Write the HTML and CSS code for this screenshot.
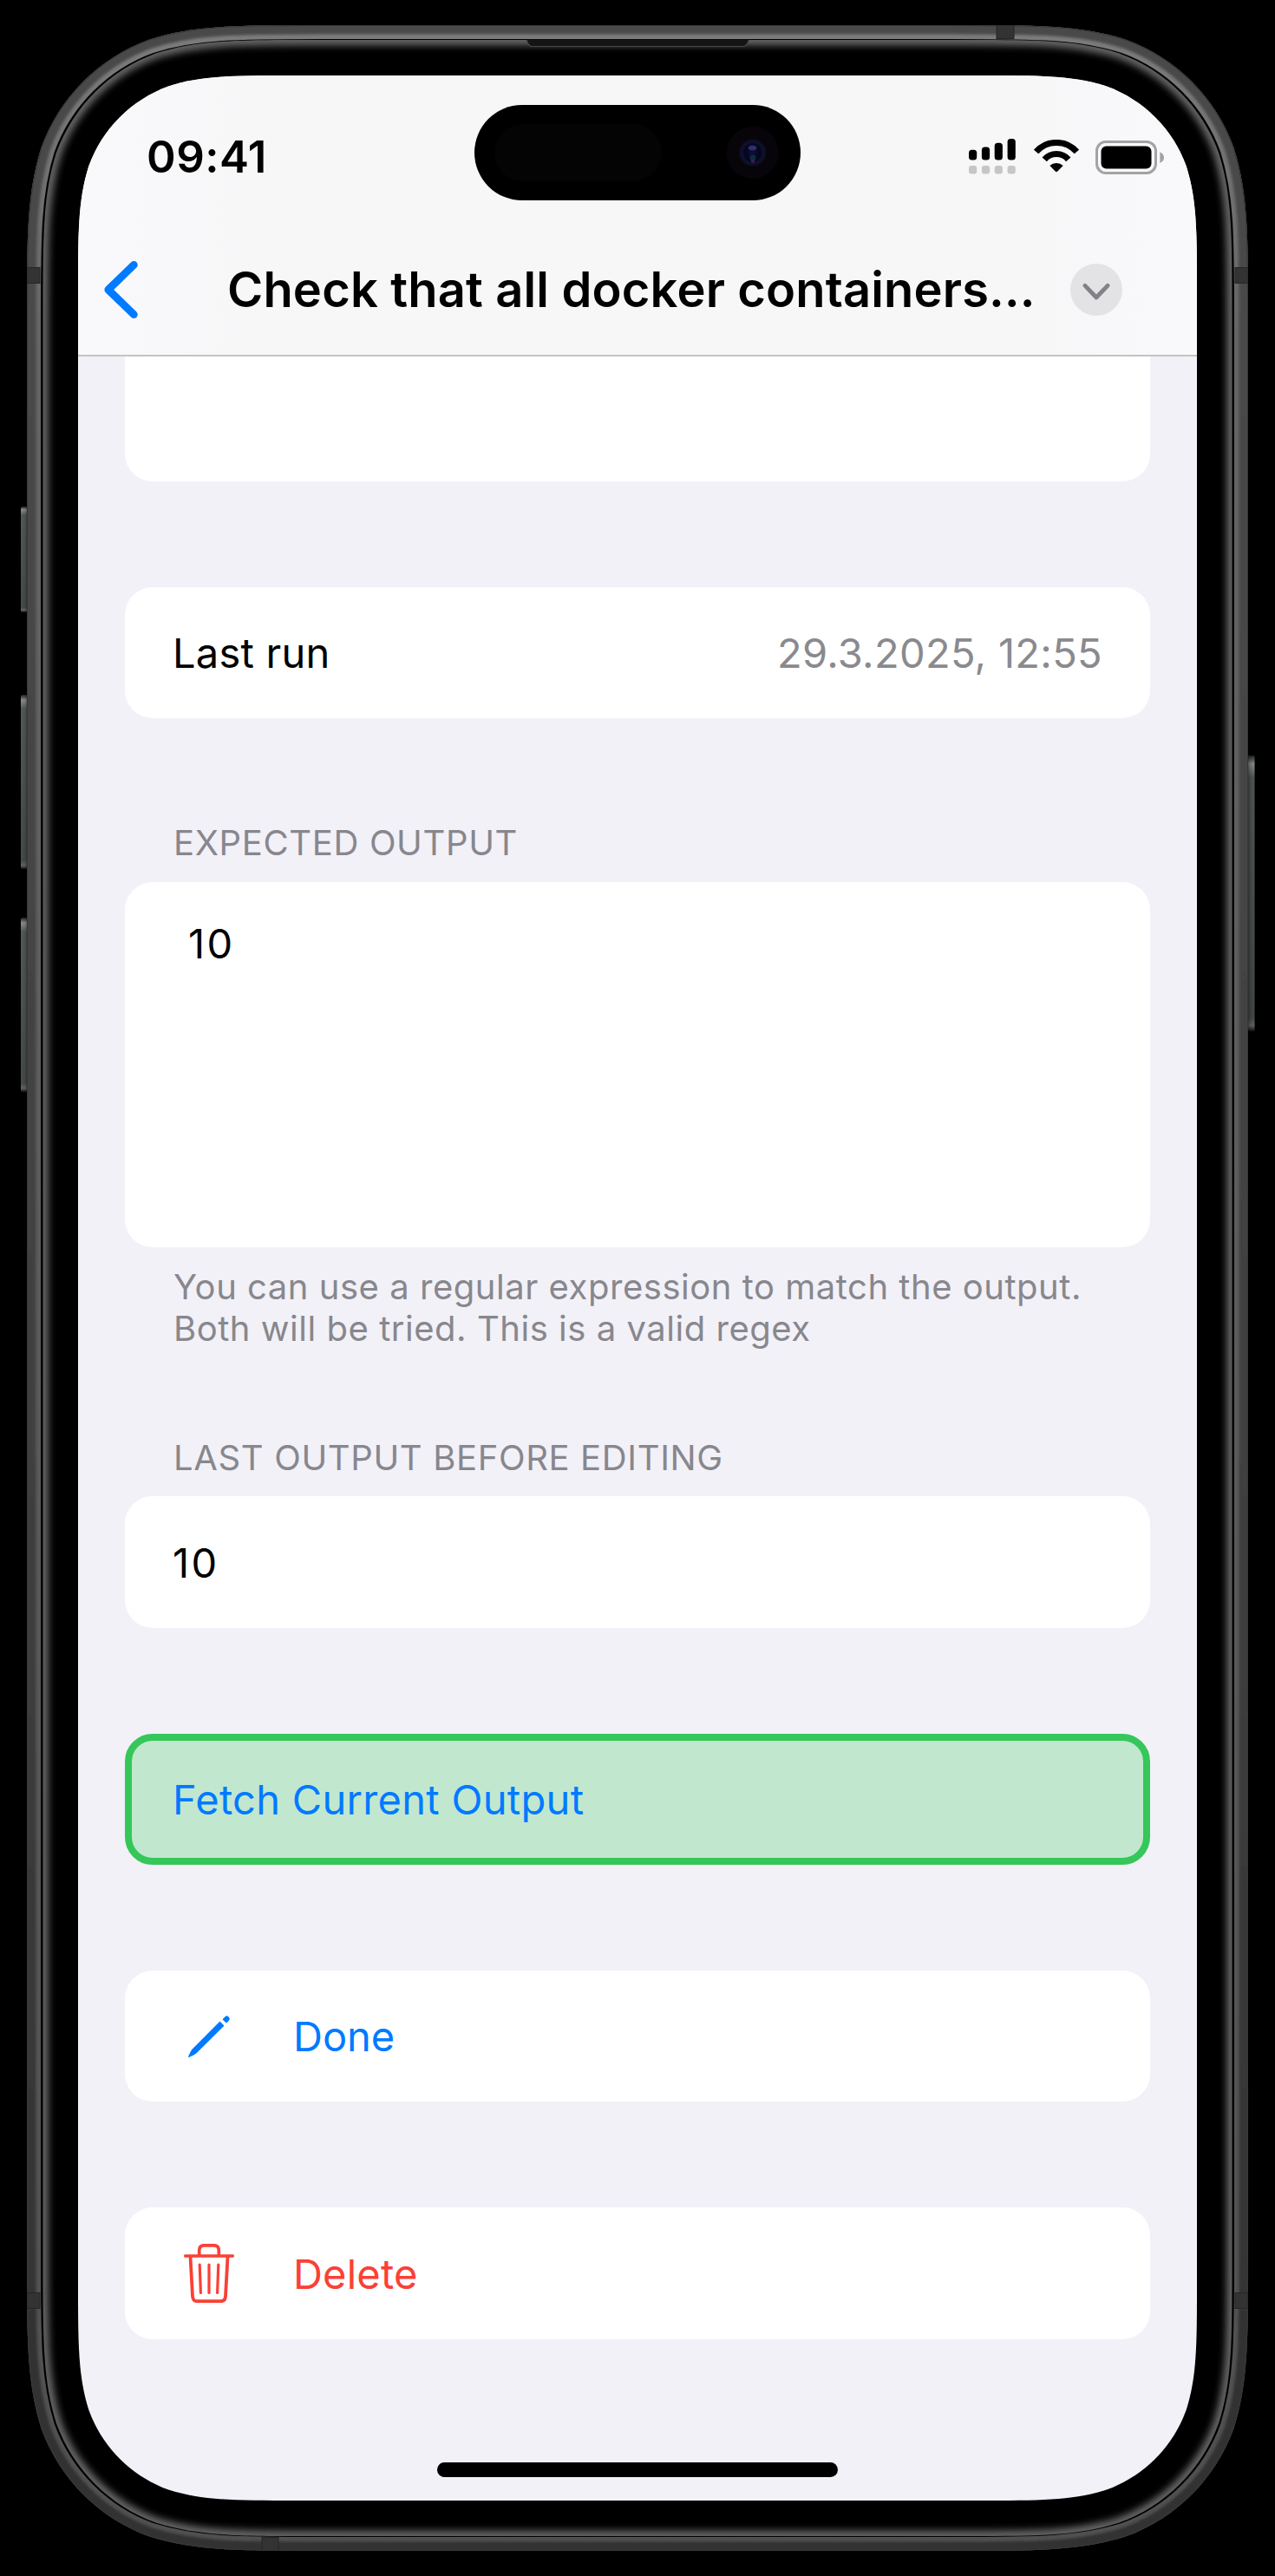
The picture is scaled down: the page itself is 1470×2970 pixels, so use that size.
FILE: index.html
```html
<!DOCTYPE html>
<html lang="en">
<head>
<meta charset="utf-8">
<title>Check that all docker containers…</title>
<link rel="stylesheet" href="styles.css">
</head>
<body>
<div class="device">
  <svg class="bezel" viewBox="0 0 1470 2970" aria-hidden="true">
    <defs>
      <path id="outer" d="M371.9 29H1098.1C1196.3 29 1245.3 29 1298.2 45.7C1355.9 66.7 1401.3 112.1 1422.3 169.8C1439 222.7 1439 271.7 1439 369.9V2600.1C1439 2698.3 1439 2747.3 1422.3 2800.2C1401.3 2857.9 1355.9 2903.3 1298.2 2924.3C1245.3 2941 1196.3 2941 1098.1 2941H371.9C273.7 2941 224.7 2941 171.8 2924.3C114.1 2903.3 68.7 2857.9 47.7 2800.2C31 2747.3 31 2698.3 31 2600.1V369.9C31 271.7 31 222.7 47.7 169.8C68.7 112.1 114.1 66.7 171.8 45.7C224.7 29 273.7 29 371.9 29Z"/>
      <path id="inner" d="M364.4 46H1105.6C1196.3 46 1241.6 46 1290.4 61.4C1343.7 80.8 1385.7 122.8 1405.1 176.1C1420.5 224.9 1420.5 270.2 1420.5 360.9V2609.1C1420.5 2699.8 1420.5 2745.1 1405.1 2793.9C1385.7 2847.2 1343.7 2889.2 1290.4 2908.6C1241.6 2924 1196.3 2924 1105.6 2924H364.4C273.7 2924 228.4 2924 179.6 2908.6C126.3 2889.2 84.3 2847.2 64.9 2793.9C49.5 2745.1 49.5 2699.8 49.5 2609.1V360.9C49.5 270.2 49.5 224.9 64.9 176.1C84.3 122.8 126.3 80.8 179.6 61.4C228.4 46 273.7 46 364.4 46Z"/>
      <clipPath id="outerClip"><use href="#outer"/></clipPath>
      <clipPath id="innerClip"><use href="#inner"/></clipPath>
      <linearGradient id="rim" x1="0" y1="29" x2="0" y2="2941" gradientUnits="userSpaceOnUse">
        <stop offset="0" stop-color="#7c7c7c"/><stop offset=".12" stop-color="#666"/><stop offset="1" stop-color="#505050"/>
      </linearGradient>
      <linearGradient id="band" x1="0" y1="29" x2="0" y2="2941" gradientUnits="userSpaceOnUse">
        <stop offset="0" stop-color="#4a4a4a"/><stop offset=".5" stop-color="#414141"/><stop offset="1" stop-color="#303030"/>
      </linearGradient>
      <linearGradient id="key" x1="0" y1="0" x2="0" y2="1">
        <stop offset="0" stop-color="#222"/><stop offset=".03" stop-color="#8c9091"/><stop offset=".08" stop-color="#555959"/><stop offset=".95" stop-color="#484b4b"/><stop offset=".98" stop-color="#666"/><stop offset="1" stop-color="#111"/>
      </linearGradient>
      <linearGradient id="keyShadeLeft"><stop offset="0" stop-color="#000" stop-opacity="0"/><stop offset=".5" stop-color="#000" stop-opacity=".1"/><stop offset="1" stop-color="#000" stop-opacity=".7"/></linearGradient>
      <linearGradient id="keyShadeRight"><stop offset="0" stop-color="#000" stop-opacity=".7"/><stop offset=".5" stop-color="#000" stop-opacity=".2"/><stop offset="1" stop-color="#000" stop-opacity="0"/></linearGradient>
      <filter id="soft" x="-5%" y="-5%" width="110%" height="110%"><feGaussianBlur stdDeviation="1.6"/></filter>
      <filter id="glow" x="-5%" y="-5%" width="110%" height="110%"><feGaussianBlur stdDeviation="4"/></filter>
      <radialGradient id="lens"><stop offset="0" stop-color="#10103a"/><stop offset=".55" stop-color="#04041c"/><stop offset=".8" stop-color="#10122e"/><stop offset="1" stop-color="#080814"/></radialGradient>
    </defs>
    <g fill="url(#key)">
      <rect x="24" y="584" width="10" height="122" rx="2"/>
      <rect x="24" y="801" width="10" height="201" rx="2"/>
      <rect x="24" y="1058" width="10" height="201" rx="2"/>
      <rect x="1436" y="871" width="10.5" height="318" rx="2"/>
    </g>
    <path d="M24 584H34V706H24ZM24 801H34V1002H24ZM24 1058H34V1259H24Z" fill="url(#keyShadeLeft)"/>
    <path d="M1436 871H1447V1189H1436Z" fill="url(#keyShadeRight)"/>
    <g clip-path="url(#outerClip)" fill="none">
      <use href="#outer" fill="#000" stroke="url(#rim)" stroke-width="32"/>
      <use href="#outer" stroke="url(#band)" stroke-width="21" filter="url(#soft)"/>
      <use href="#outer" stroke="#383838" stroke-width="2"/>
      <g fill="#333" stroke="#262626">
        <rect x="1149" y="29" width="20" height="15.5"/>
        <rect x="302" y="2925.5" width="19" height="16"/>
        <rect x="31" y="308.5" width="15" height="18"/>
        <rect x="1424" y="308.5" width="15" height="18"/>
        <rect x="31" y="2643.500" width="15" height="18"/>
        <rect x="1424" y="2643.500" width="15" height="18"/>
      </g>
    </g>
    <g clip-path="url(#innerClip)" fill="none">
      <use href="#inner" fill="#000"/>
      <use href="#inner" stroke="#6c6c6c" stroke-width="12" filter="url(#glow)"/>
    </g>
    <path d="M607 45.500Q609.500 53.500 613 53.500H857Q861 53.500 863.500 45.500Z" fill="#141414"/>
    <path d="M607 46Q609.500 53.500 613 53.500H857Q861 53.500 863.500 46" fill="none" stroke="#484848" stroke-width="1.200"/>
  </svg>

  <main class="screen">
    <header class="topbar">
      <div class="status">
        <span class="time">09:41</span>
        <svg class="signal" width="54" height="41" viewBox="0 0 54 41">
          <rect x="0" y="12.700" width="9.200" height="11.700" rx="3.500"/>
          <rect x="14.900" y="9.400" width="9.200" height="15" rx="3.500"/>
          <rect x="29.700" y="4.700" width="9.200" height="19.700" rx="3.500"/>
          <rect x="44.600" y="0" width="9.200" height="24.400" rx="3.500"/>
          <g fill="#c6c6c7"><rect x="0" y="31" width="9.200" height="9.500" rx="3"/><rect x="14.900" y="31" width="9.200" height="9.500" rx="3"/><rect x="29.700" y="31" width="9.200" height="9.500" rx="3"/><rect x="44.600" y="31" width="9.200" height="9.500" rx="3"/></g>
        </svg>
        <svg class="wifi" width="52" height="38" viewBox="0 0 52 38">
          <path d="M2.600 14A31.200 31.200 0 0 1 49.400 14M12.200 22.800A18.300 18.300 0 0 1 39.800 22.800" fill="none" stroke="#000" stroke-width="7.100"/>
          <path d="M18.300 30A11.500 11.500 0 0 1 33.700 30L27 36.800Q26 37.700 25 36.800Z"/>
        </svg>
        <svg class="battery" width="79" height="39" viewBox="0 0 79 39">
          <rect x="1.500" y="1.500" width="68" height="36" rx="10.500" fill="none" stroke="#a3a3a5" stroke-width="3"/>
          <rect x="6.500" y="6.500" width="58" height="26" rx="6"/>
          <path d="M74.300 13.300Q79 15.500 79 19.700T74.300 26Z" fill="#a3a3a5"/>
        </svg>
      </div>
      <nav class="nav">
        <svg class="back" width="40" height="66" viewBox="0 0 40 66"><path d="M34.300 4.400L4.800 33L34.300 61.600" fill="none" stroke="#007aff" stroke-width="8.800" stroke-linecap="round" stroke-linejoin="round"/></svg>
        <h1 class="title">Check that all docker containers…</h1>
        <svg class="more" width="60" height="60" viewBox="0 0 60 60"><circle cx="30" cy="30" r="30" fill="#e3e3e5"/><path d="M17 25.300L30 39L43 25.300" fill="none" stroke="#828286" stroke-width="4.800" stroke-linecap="round" stroke-linejoin="round"/></svg>
      </nav>
    </header>

    <div class="content">
      <section class="card card-cut"></section>

      <section class="card row gap-top"><span>Last run</span><span class="value">29.3.2025, 12:55</span></section>

      <h2 class="label">EXPECTED OUTPUT</h2>
      <section class="card editor"><span class="num">10</span></section>
      <p class="hint">You can use a regular expression to match the output.<br>Both will be tried. This is a valid regex</p>

      <h2 class="label label-after-hint">LAST OUTPUT BEFORE EDITING</h2>
      <section class="card row"><span class="num">10</span></section>

      <section class="card row gap-top fetch"><span>Fetch Current Output</span></section>

      <section class="card row gap-top action done">
        <span class="slot"><svg width="48" height="48" viewBox="0 0 48 48" fill="#007aff"><path d="M36.500 6.500L41.500 11.500L9.500 43.300Q8 44.700 0.700 48Q0 48 0 47.300Q3.200 40 4.700 38.500Z"/><path d="M39.500 4.200L41.900 1.700Q44.500-.8 46.700 1.400T46.400 6.200L43.900 8.600Z"/></svg></span>
        <span>Done</span>
      </section>

      <section class="card row gap-top action delete">
        <span class="slot"><svg width="58" height="68" viewBox="0 0 58 68" fill="none" stroke="#fb4036" stroke-linecap="round" stroke-linejoin="round"><path d="M1.800 14H56.200M17.700 13.500V7.500Q17.700 1.800 23.300 1.800H34.700Q40.300 1.800 40.300 7.500V13.500" stroke-width="3.700"/><path d="M7.500 15L10 60.500Q10.400 66.200 15.500 66.200H42.500Q47.600 66.200 48 60.500L50.500 15" stroke-width="3.800"/><path d="M18.200 24L19.400 56.500M29 24V56.500M39.800 24L38.600 56.500" stroke-width="3.200"/></svg></span>
        <span>Delete</span>
      </section>
    </div>

    <div class="home"></div>
  </main>

  <svg class="island" width="376" height="110" viewBox="0 0 376 110" aria-hidden="true">
    <rect width="376" height="110" rx="55"/>
    <rect x="23" y="22" width="193" height="66" rx="33" fill="#040404"/>
    <circle cx="320.700" cy="55" r="30" fill="#07050a"/>
    <circle cx="320.700" cy="55" r="16" fill="url(#lens)"/>
    <ellipse cx="320.500" cy="49.500" rx="5" ry="3" fill="#302e70"/>
    <circle cx="321" cy="61" r="3.500" fill="#0b2c40"/>
    <circle cx="321" cy="65" r="2" fill="#3b1e56"/>
  </svg>
</div>
</body>
</html>
```

FILE: styles.css
```css
* { box-sizing: border-box; }

body {
  margin: 0;
  background: #000;
  font-family: Inter, "Liberation Sans", sans-serif;
  color: #000;
}

svg { display: block; flex: none; }

.device {
  position: relative;
  width: 1470px;
  height: 2970px;
  padding: 87px 90px;
}

.bezel {
  position: absolute;
  inset: 0;
  width: 1470px;
  height: 2970px;
}

.screen {
  position: relative;
  display: flex;
  flex-direction: column;
  width: 1290px;
  height: 2796px;
  background: #f2f1f8;
  clip-path: path("M252.2 0H1037.8C1110.4 0 1146.7 0 1185.8 12.4C1228.5 27.9 1262.1 61.5 1277.6 104.2C1290 143.3 1290 179.6 1290 252.2V2543.8C1290 2616.4 1290 2652.7 1277.6 2691.8C1262.1 2734.5 1228.5 2768.1 1185.8 2783.6C1146.7 2796 1110.4 2796 1037.8 2796H252.2C179.6 2796 143.3 2796 104.2 2783.6C61.5 2768.1 27.9 2734.5 12.4 2691.8C0 2652.7 0 2616.4 0 2543.8V252.2C0 179.6 0 143.3 12.4 104.2C27.9 61.5 61.5 27.9 104.2 12.4C143.3 0 179.6 0 252.2 0Z");
}

.topbar {
  flex: none;
  height: 324px;
  border-bottom: 2px solid #c3c3c5;
  background: linear-gradient(90deg, #f9f9fc, #f7f7f8 16%, #f7f7f8 84%, #f9f9fc);
}

.status {
  display: flex;
  align-items: center;
  height: 186px;
  padding: 0 38px 0 79px;
}

.time {
  margin: 1px auto 0 0;
  font-size: 51px;
  font-weight: 600;
  line-height: 60px;
  letter-spacing: 0.5px;
}

.wifi { margin: 0 19px 0 21px; }
.battery { margin-top: 3px; }

.nav {
  display: flex;
  align-items: center;
  height: 122px;
  padding: 0 86px 0 30px;
}

.title {
  margin: 0 auto 0 102px;
  font-size: 56px;
  font-weight: 600;
  line-height: 68px;
  letter-spacing: 0.16px;
  white-space: nowrap;
}

.content {
  display: flex;
  flex-direction: column;
  padding: 0 54px;
}

.card {
  flex: none;
  border-radius: 32px;
  background: #fff;
  font-size: 47px;
  line-height: 57px;
  letter-spacing: 0.25px;
}

.card-cut {
  height: 143.7px;
  border-top-left-radius: 0;
  border-top-right-radius: 0;
}

.row {
  display: flex;
  align-items: center;
  height: 151.3px;
  padding: 0 55px;
}

.gap-top { margin-top: 122px; }

.value {
  margin-left: auto;
  color: #8a8a8e;
  letter-spacing: 0.32px;
}

.num { letter-spacing: 2.5px; }

.label {
  margin: 120.4px 55px 20.8px 56px;
  color: #88878d;
  font-size: 40px;
  font-weight: 400;
  line-height: 48px;
  letter-spacing: 0.64px;
}

.label-after-hint { margin-top: 101px; }

.editor {
  height: 420.5px;
  padding: 42px 73px;
}

.hint {
  margin: 22px 55px 0 56px;
  color: #88878d;
  font-size: 40px;
  line-height: 48px;
  letter-spacing: 0.53px;
  white-space: nowrap;
}

.fetch {
  padding: 0 47px;
  border: 8px solid #35c759;
  background: #c2e7cf;
  color: #007aff;
  letter-spacing: 0.3px;
}

.action { gap: 55px; }

.slot {
  display: flex;
  justify-content: center;
  width: 84px;
}

.done { color: #007aff; letter-spacing: 0; }
.delete { color: #fb4036; letter-spacing: 0.2px; }

.home {
  width: 462px;
  height: 17px;
  margin: auto auto 27px;
  border-radius: 9px;
  background: #000;
}

.island {
  position: absolute;
  top: 121px;
  left: 547px;
}
```
